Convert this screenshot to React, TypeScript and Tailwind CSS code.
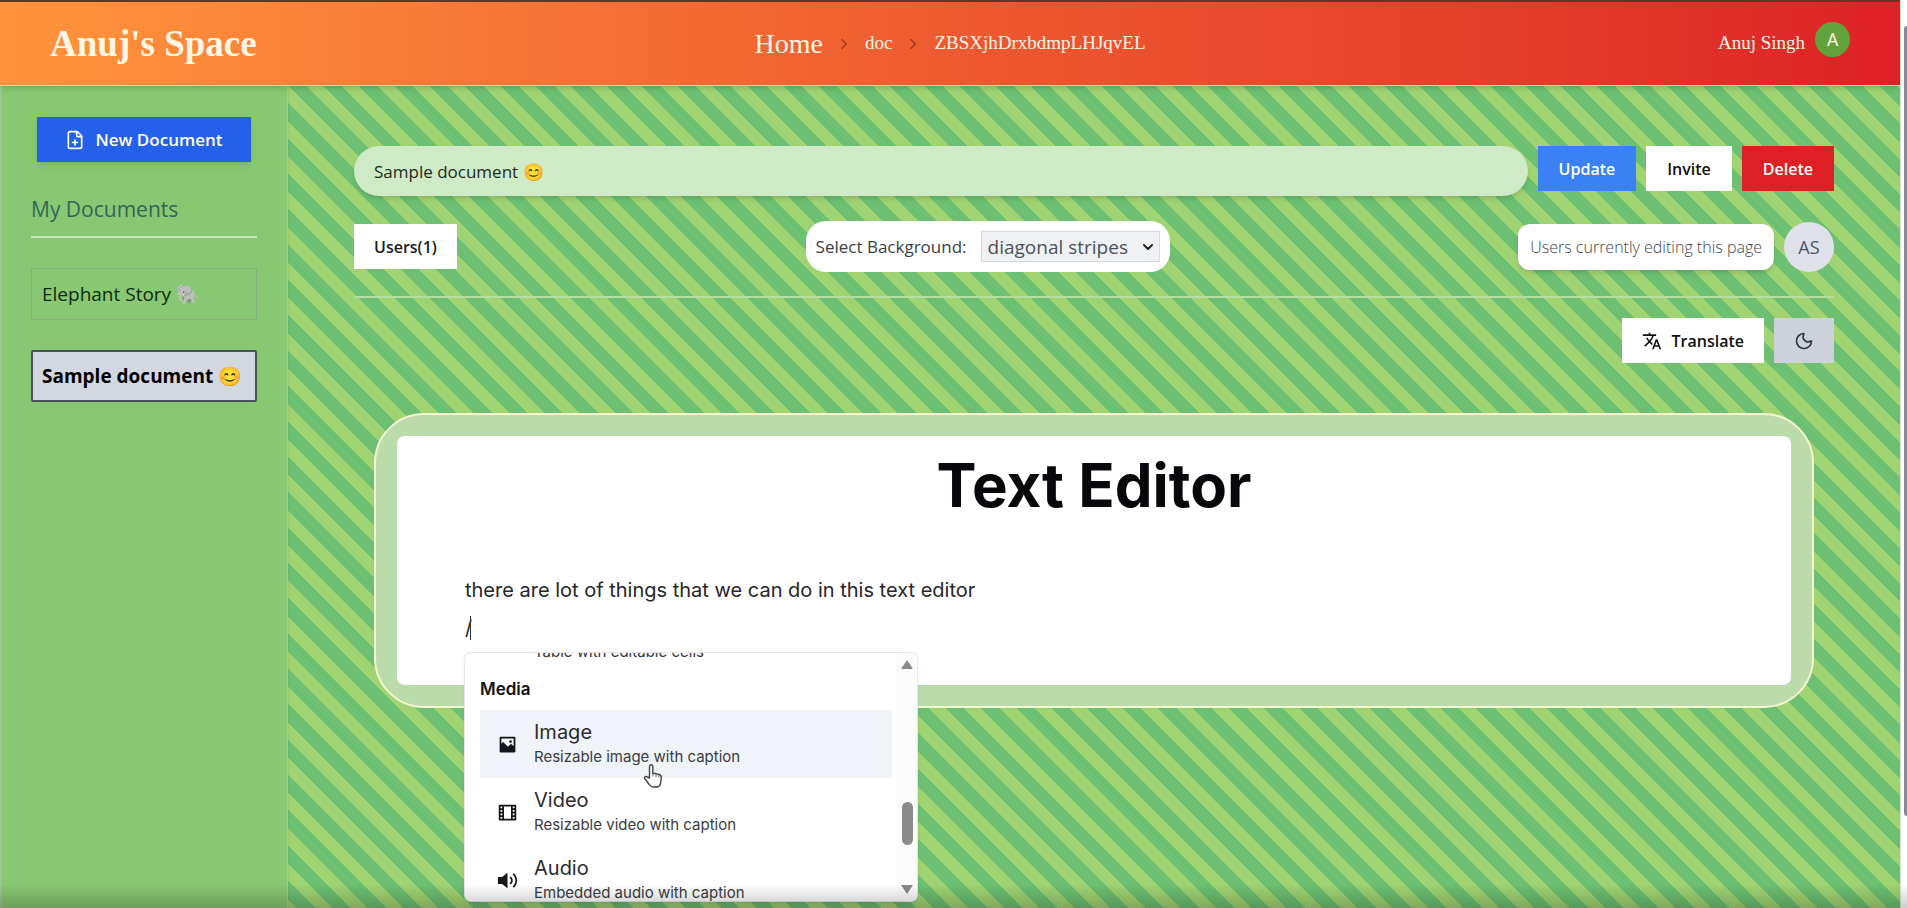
import type { ReactNode } from "react";
import { ChevronDown, ChevronRight, FilePlus, Moon } from "lucide-react";
import { MdTranslate } from "react-icons/md";
import { RiFilmLine, RiImage2Fill, RiVolumeUpFill } from "react-icons/ri";

function ActionButton({ className, children, label }: { className: string; children: ReactNode; label?: string }) {
  return (
    <button
      type="button"
      aria-label={label}
      className={`flex h-[45px] shrink-0 items-center justify-center text-base font-semibold ${className}`}
    >
      {children}
    </button>
  );
}

function Header() {
  return (
    <header className="z-10 flex h-[86px] items-center justify-between border-t-2 border-b border-t-[#5b3a22] border-b-[#d5d9a0] bg-linear-to-r from-[#ff943c] via-[#ee5a30] to-[#dd2026] px-[50px] font-['Liberation_Serif',serif] text-[#fff6e6] shadow-md">
      <h1 className="flex-1 text-[37px] font-bold">Anuj's Space</h1>
      <nav aria-label="Breadcrumb" className="flex items-center gap-3 text-[19px]">
        <a href="#home" className="text-[28px]">Home</a>
        <ChevronRight className="size-[18px] text-[#9c3f1c]" />
        <a href="#doc">doc</a>
        <ChevronRight className="size-[18px] text-[#9c3f1c]" />
        <a href="#current">ZBSXjhDrxbdmpLHJqvEL</a>
      </nav>
      <div className="flex flex-1 items-center justify-end gap-[10px]">
        <span className="text-[19px]">Anuj Singh</span>
        <button type="button" aria-label="Account" className="mb-2 size-[35px] rounded-full bg-[#5fa33a] font-['Roboto',sans-serif] text-lg">
          A
        </button>
      </div>
    </header>
  );
}

function Sidebar() {
  return (
    <aside className="w-[288px] shrink-0 border-r border-l-2 border-r-[#9fcf94] border-l-[#9cc78f] bg-[#88c872] pt-[31px] pr-[30px] pl-[29px] shadow-sm">
      <div className="px-[6px]">
        <button type="button" className="flex h-[45px] w-full items-center justify-center gap-[10px] bg-[#2560eb] text-[17px] font-semibold text-white shadow-md">
          <FilePlus className="size-5" />
          New Document
        </button>
      </div>
      <h2 className="mt-[31px] border-b-2 border-[#c6e6b8] pb-[11px] text-[21px] leading-8 font-medium text-[#33655a]">My Documents</h2>
      <ul className="mt-[30px] flex flex-col gap-[30px] text-[19px]">
        <li>
          <a href="#elephant" className="flex h-[52px] items-center border border-[#85b27b] px-[10px] text-[#0b2a0b]">Elephant Story 🐘</a>
        </li>
        <li>
          <a href="#sample" className="flex h-[52px] items-center rounded-xs border-2 border-[#45525a] bg-[#d3d7df] px-[9px] font-bold whitespace-nowrap text-black">Sample document 😊</a>
        </li>
      </ul>
    </aside>
  );
}

const media = [
  { title: "Image", text: "Resizable image with caption", icon: RiImage2Fill, active: true },
  { title: "Video", text: "Resizable video with caption", icon: RiFilmLine, active: false },
  { title: "Audio", text: "Embedded audio with caption", icon: RiVolumeUpFill, active: false },
];

function HandCursor() {
  return (
    <svg viewBox="0 0 20 26" className="absolute top-[110px] left-[178px] h-[26px] w-5" aria-hidden="true">
      <path
        d="M6.5 15V3.5C6.5 1.2 9.8 1.2 9.8 3.5V10l6.1 1.4c1.8.4 2.6 1.6 2.4 3.4l-.7 5c-.3 2.6-2 4.2-4.4 4.2h-2.600c-2 0-3.300-.9-4.300-2.500L1.600 15.500c-.7-1.700 1.200-2.800 2.500-1.500Z"
        fill="#fff"
        stroke="#444"
        strokeWidth="1.400"
        strokeLinejoin="round"
      />
      <path d="M10 10v3.500M13 11v3M15.800 11.500v3" stroke="#555" strokeWidth="1" fill="none" />
    </svg>
  );
}

function SlashMenu() {
  return (
    <div className="absolute top-full left-0 mt-[10px] flex h-[248px] w-[452px] overflow-hidden rounded-md bg-white shadow-md ring-1 ring-gray-200">
      <div className="flex-1 pr-[5px] pl-[15px]">
        <p className="-mt-[11px] pl-[54px] text-[15px] leading-5 text-[#333]">Table with editable cells</p>
        <h3 className="mt-[13px] mb-[7px] text-[17px] leading-7 font-semibold text-[#111]">Media</h3>
        <ul>
          {media.map(({ title, text, icon: Icon, active }) => (
            <li key={title}>
              <button type="button" className={active ? "flex h-[68px] w-full items-center gap-4 bg-[#f0f3f8] pl-[17px] text-left" : "flex h-[68px] w-full items-center gap-4 pl-[17px] text-left"}>
                <Icon className="size-[21px] text-[#15161c]" />
                <span className="flex flex-col">
                  <span className="text-xl leading-[26px] text-[#2b2b30]">{title}</span>
                  <span className="text-[15px] leading-6 text-[#3c3c42]">{text}</span>
                </span>
              </button>
            </li>
          ))}
        </ul>
      </div>
      <div className="flex w-[20px] flex-col items-center bg-[#fcfcfc] py-[7px]" aria-hidden="true">
        <svg viewBox="0 0 12 9" className="h-[9px] w-3"><path d="M6 0l6 9H0z" fill="#8a8a8a" /></svg>
        <div className="mt-[133px] h-[43px] w-[11px] rounded-full bg-[#8c8c8c]" />
        <svg viewBox="0 0 12 9" className="mt-auto h-[9px] w-3"><path d="M6 9L0 0h12z" fill="#8a8a8a" /></svg>
      </div>
      <HandCursor />
    </div>
  );
}

function Editor() {
  return (
    <section className="mx-5 mt-[50px] rounded-[50px] border-2 border-[#f3f6cf] bg-[#bbdcaa] p-[21px] font-['Inter',sans-serif]">
      <div className="rounded-lg bg-white px-[68px] pb-[42px]">
        <h2 className="pt-3 text-center text-6xl leading-[74px] font-bold text-[#07070c]">Text Editor</h2>
        <p className="mt-[50px] text-xl leading-9 text-[#26262a]">there are lot of things that we can do in this text editor</p>
        <div className="relative mt-1 h-[31px]">
          <p className="flex items-center text-xl leading-8 text-[#26262a]">
            <span>/</span>
            <span className="-ml-[2px] h-6 w-px bg-[#333]" />
          </p>
          <SlashMenu />
        </div>
      </div>
    </section>
  );
}

function Main() {
  return (
    <main className="min-w-0 flex-1 px-[66px] pt-[60px]">
      <form className="flex items-start gap-[10px]" onSubmit={(e) => e.preventDefault()}>
        <input
          type="text"
          aria-label="Document title"
          defaultValue="Sample document 😊"
          className="h-[50px] min-w-0 flex-1 rounded-full bg-[#cfeac6] px-5 text-[17px] text-[#1c2b1c] shadow-md outline-none"
        />
        <ActionButton className="bg-[#3b81f6] px-[21px] text-white">Update</ActionButton>
        <ActionButton className="bg-white px-[21px] text-[#111]">Invite</ActionButton>
        <ActionButton className="bg-[#dc2026] px-[21px] text-white">Delete</ActionButton>
      </form>

      <div className="mt-[25px] flex items-center justify-between border-b-2 border-[#b5dea0] pb-[24px]">
        <ActionButton className="bg-white px-5 text-[#1b1b1f]">Users(1)</ActionButton>
        <div className="flex h-[51px] items-center gap-[14px] rounded-[20px] bg-white px-[10px]">
          <label htmlFor="background" className="text-[17px] font-medium text-[#3a3f47]">Select Background:</label>
          <span className="relative flex items-center">
            <select id="background" defaultValue="diagonal" className="h-[31px] w-[179px] appearance-none border border-[#d5d9e0] bg-[#eff1f5] pl-[6px] text-[19px] leading-7 text-[#4b5158]">
              <option value="diagonal">diagonal stripes</option>
              <option value="plain">plain</option>
            </select>
            <ChevronDown className="pointer-events-none absolute right-1 size-4 stroke-3 text-[#222]" />
          </span>
        </div>
        <div className="flex items-center gap-[10px]">
          <p className="flex h-[46px] items-center rounded-xl bg-white px-3 text-base font-light text-[#41464d] shadow-md">Users currently editing this page</p>
          <span className="flex size-[50px] items-center justify-center rounded-full bg-[#dfe2ea] text-lg text-[#4b5563]">AS</span>
        </div>
      </div>

      <div className="mt-5 flex justify-end gap-[10px]">
        <ActionButton className="gap-[10px] bg-white px-5 text-[#111]">
          <MdTranslate className="size-5" />
          Translate
        </ActionButton>
        <ActionButton label="Toggle dark mode" className="w-[60px] bg-[#cdd2da] text-[#2d3540]">
          <Moon className="size-5" />
        </ActionButton>
      </div>

      <Editor />
    </main>
  );
}

export default function App() {
  return (
    <div className="flex h-screen overflow-hidden font-['Open_Sans',sans-serif]">
      <div className="flex min-w-0 flex-1 flex-col bg-[repeating-linear-gradient(45deg,#a0d473_0px,#a0d473_10px,#6dc071_10px,#6dc071_23px,#a0d473_23px,#a0d473_25px)]">
        <Header />
        <div className="flex min-h-0 flex-1">
          <Sidebar />
          <Main />
        </div>
      </div>
      <div className="w-[7px] border-l border-[#d8e4d4] bg-white pt-[26px] pl-[3px]" aria-hidden="true">
        <div className="h-[790px] rounded-l-full bg-[#8b8795]" />
      </div>
      <div className="pointer-events-none fixed inset-x-0 bottom-0 h-6 bg-linear-to-t from-black/20 to-transparent" />
    </div>
  );
}
